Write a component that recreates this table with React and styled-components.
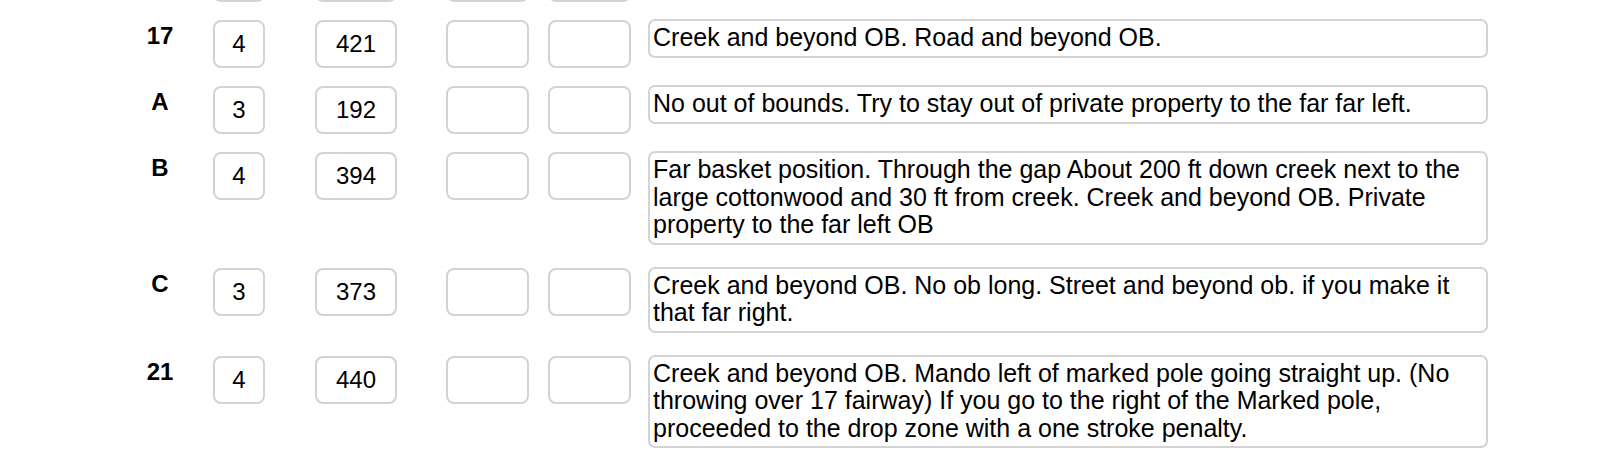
import React from "react";
import styled, { createGlobalStyle } from "styled-components";

const GlobalStyle = createGlobalStyle`
  html, body {
    margin: 0;
    padding: 0;
    background: #ffffff;
  }
  body {
    font-family: "Liberation Sans", Arial, Helvetica, sans-serif;
    color: #000;
    overflow: hidden;
  }
`;

const Page = styled.div`
  width: 1620px;
  height: 472px;
  overflow: hidden;
`;

const HoleList = styled.div`
  display: flex;
  flex-direction: column;
  padding-left: 130px;
  margin-top: -46px;
`;

const HoleRow = styled.div`
  display: flex;
  align-items: flex-start;
`;

const HoleLabel = styled.div`
  width: 60px;
  padding-top: 2px;
  margin-right: 23px;
  text-align: center;
  font-size: 24px;
  font-weight: bold;
  line-height: 27px;
`;

const Cell = styled.div`
  box-sizing: border-box;
  width: ${(props) => props.cellwidth}px;
  height: 48px;
  margin-right: ${(props) => props.gap}px;
  margin-bottom: 18px;
  display: flex;
  align-items: center;
  justify-content: center;
  border: 2px solid #d3d3d3;
  border-radius: 8px;
  font-size: 24px;
  background: #fff;
`;

const Notes = styled.div`
  box-sizing: border-box;
  width: 840px;
  margin-top: -1px;
  margin-bottom: 23px;
  padding: 3px 3px 4px;
  border: 2px solid #d3d3d3;
  border-radius: 7px;
  font-size: 25px;
  line-height: 27.5px;
  min-height: 37px;
`;

const holes = [
  { id: "prev", label: "", par: "", distance: "", notes: "" },
  {
    id: "17",
    label: "17",
    par: "4",
    distance: "421",
    notes: "Creek and beyond OB. Road and beyond OB.",
  },
  {
    id: "A",
    label: "A",
    par: "3",
    distance: "192",
    notes:
      "No out of bounds. Try to stay out of private property to the far far left.",
  },
  {
    id: "B",
    label: "B",
    par: "4",
    distance: "394",
    notes:
      "Far basket position. Through the gap About 200 ft down creek next to the large cottonwood and 30 ft from creek. Creek and beyond OB. Private property to the far left OB",
  },
  {
    id: "C",
    label: "C",
    par: "3",
    distance: "373",
    notes:
      "Creek and beyond OB. No ob long. Street and beyond ob. if you make it that far right.",
  },
  {
    id: "21",
    label: "21",
    par: "4",
    distance: "440",
    notes:
      "Creek and beyond OB. Mando left of marked pole going straight up. (No throwing over 17 fairway) If you go to the right of the Marked pole, proceeded to the drop zone with a one stroke penalty.",
  },
];

export default function App() {
  return (
    <>
      <GlobalStyle />
      <Page>
        <HoleList>
          {holes.map((hole) => (
            <HoleRow key={hole.id}>
              <HoleLabel>{hole.label}</HoleLabel>
              <Cell cellwidth={52} gap={50}>
                {hole.par}
              </Cell>
              <Cell cellwidth={82} gap={49}>
                {hole.distance}
              </Cell>
              <Cell cellwidth={83} gap={19} />
              <Cell cellwidth={83} gap={17} />
              <Notes>{hole.notes}</Notes>
            </HoleRow>
          ))}
        </HoleList>
      </Page>
    </>
  );
}
